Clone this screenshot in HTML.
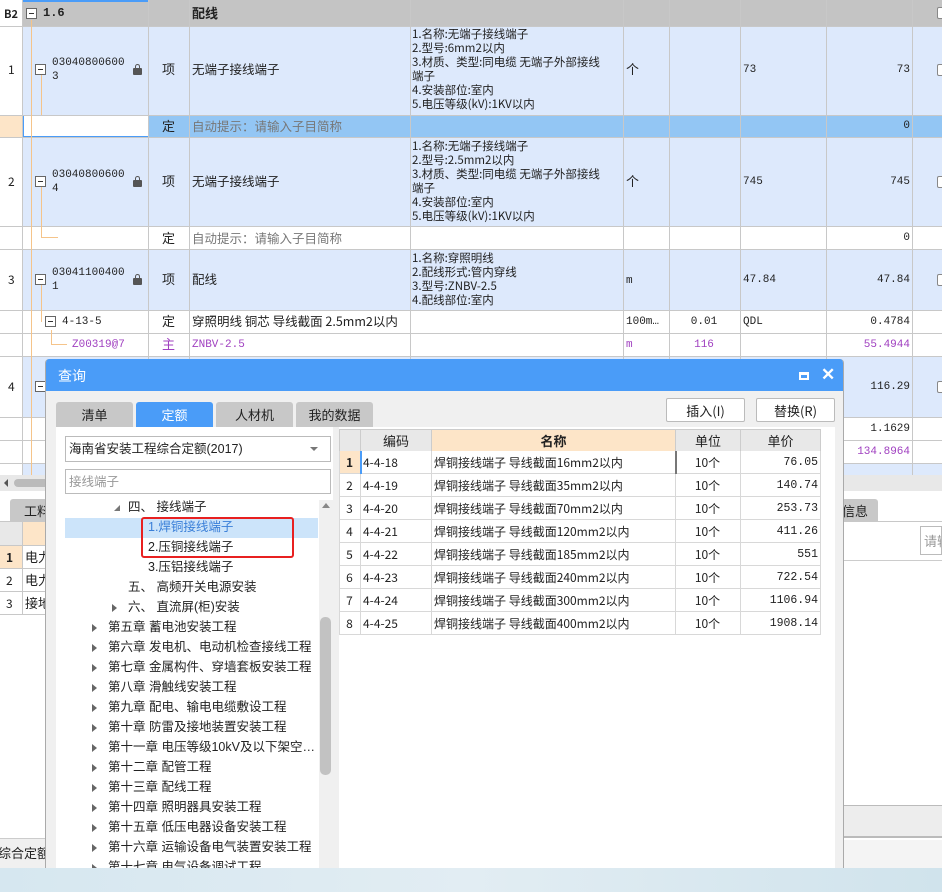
<!DOCTYPE html>
<html><head><meta charset="utf-8"><style>
*{margin:0;padding:0;box-sizing:border-box}
body{width:942px;height:892px;overflow:hidden;position:relative;background:#fff;font-family:"Liberation Sans","Noto Sans CJK SC",sans-serif;font-size:12px;color:#222}
.a{position:absolute;line-height:14px;white-space:nowrap}
.s{font-family:"WenQuanYi Zen Hei","Noto Sans CJK SC",sans-serif;font-size:12px}
.m{font-family:"Liberation Mono","WenQuanYi Zen Hei",monospace;font-size:11px}
.hl{position:absolute;height:1px;background:#c8c8c8;left:0;width:942px}
.vl{position:absolute;width:1px;background:#c8c8c8}
.bx{position:absolute;width:11px;height:11px;border:1px solid #666;background:#fff}
.bx:after{content:"";position:absolute;left:2px;top:4px;width:5px;height:1px;background:#333}
.lk{position:absolute;width:9px;height:7px;background:#555;border-radius:1px}
.lk:before{content:"";position:absolute;left:2px;top:-4px;width:5px;height:5px;border:1.5px solid #555;border-bottom:none;border-radius:3px 3px 0 0;box-sizing:border-box}
.tree{position:absolute;left:0;font-size:12.5px;line-height:15px;color:#222;white-space:nowrap;font-family:"Liberation Sans","Noto Sans CJK SC",sans-serif}
.tri{position:absolute;width:0;height:0;border-top:4px solid transparent;border-bottom:4px solid transparent;border-left:5px solid #666}
</style></head><body>
<div class="a" style="left:22px;top:0;width:920px;height:26px;background:#c4c4c4"></div>
<div class="a" style="left:22px;top:0;width:127px;height:2px;background:#4a9cf8"></div>
<div class="a" style="left:22px;top:26px;width:920px;height:89px;background:#dde9fc"></div>
<div class="a" style="left:148px;top:115px;width:794px;height:22px;background:#93c6f4"></div>
<div class="a" style="left:0;top:115px;width:22px;height:22px;background:#fde5c8"></div>
<div class="a" style="left:22px;top:115px;width:127px;height:22px;border:1px solid #4a9cf8;border-left:2px solid #4a9cf8;background:#fff"></div>
<div class="a" style="left:22px;top:137px;width:920px;height:89px;background:#dde9fc"></div>
<div class="a" style="left:22px;top:249px;width:920px;height:61px;background:#dde9fc"></div>
<div class="a" style="left:22px;top:356px;width:920px;height:61px;background:#dde9fc"></div>
<div class="a" style="left:22px;top:463px;width:920px;height:12px;background:#dde9fc"></div>
<div class="hl" style="top:26px"></div><div class="hl" style="top:115px"></div><div class="hl" style="top:137px"></div>
<div class="hl" style="top:226px"></div><div class="hl" style="top:249px"></div><div class="hl" style="top:310px"></div>
<div class="hl" style="top:333px"></div><div class="hl" style="top:356px"></div><div class="hl" style="top:417px"></div>
<div class="hl" style="top:440px"></div><div class="hl" style="top:463px"></div>
<div class="vl" style="left:22px;top:0;height:475px"></div><div class="vl" style="left:148px;top:0;height:475px"></div>
<div class="vl" style="left:189px;top:0;height:475px"></div><div class="vl" style="left:410px;top:0;height:475px"></div>
<div class="vl" style="left:623px;top:0;height:475px"></div><div class="vl" style="left:669px;top:0;height:475px"></div>
<div class="vl" style="left:740px;top:0;height:475px"></div><div class="vl" style="left:826px;top:0;height:475px"></div>
<div class="vl" style="left:912px;top:0;height:475px"></div>
<div class="vl" style="left:31px;top:20px;height:455px;background:#f5c48a"></div>
<div class="vl" style="left:41px;top:75px;height:40px;background:#f5c48a"></div>
<div class="vl" style="left:41px;top:185px;height:53px;background:#f5c48a"></div>
<div class="a" style="left:41px;top:237px;width:17px;height:1px;background:#f5c48a"></div>
<div class="vl" style="left:41px;top:285px;height:37px;background:#f5c48a"></div>
<div class="vl" style="left:51px;top:330px;height:14px;background:#f5c48a"></div>
<div class="a" style="left:51px;top:344px;width:16px;height:1px;background:#f5c48a"></div>
<div class="a s" style="left:4px;top:7px;font-weight:bold;font-size:11px">B2</div>
<div class="bx" style="left:26px;top:8px"></div>
<div class="a m" style="left:43px;top:6px;font-weight:bold;font-size:12px">1.6</div>
<div class="a s" style="left:192px;top:6px;font-weight:bold;font-size:13px">配线</div>
<div class="a" style="left:937px;top:7px;width:8px;height:12px;border:1px solid #888;border-radius:2px;background:#fff"></div>
<div class="a s" style="left:8px;top:63px">1</div>
<div class="bx" style="left:35px;top:64px"></div>
<div class="a m" style="left:52px;top:56px">03040800600<br>3</div>
<div class="lk" style="left:133px;top:68px"></div>
<div class="a s" style="left:162px;top:62px;font-size:13px">项</div>
<div class="a s" style="left:192px;top:62px;font-size:12.5px">无端子接线端子</div>
<div class="a s" style="left:412px;top:27px;font-size:11.5px">1.名称:无端子接线端子<br>2.型号:6mm2以内<br>3.材质、类型:同电缆 无端子外部接线<br>端子<br>4.安装部位:室内<br>5.电压等级(kV):1KV以内</div>
<div class="a s" style="left:626px;top:62px;font-size:13px">个</div>
<div class="a m" style="left:743px;top:63px">73</div>
<div class="a m" style="left:826px;top:63px;width:84px;text-align:right">73</div>
<div class="a" style="left:937px;top:64px;width:8px;height:12px;border:1px solid #888;border-radius:2px;background:#fff"></div>
<div class="a s" style="left:162px;top:119px;font-size:13px">定</div>
<div class="a s" style="left:192px;top:119px;color:#777;font-size:12.5px">自动提示：请输入子目简称</div>
<div class="a m" style="left:826px;top:119px;width:84px;text-align:right">0</div>
<div class="a s" style="left:8px;top:175px">2</div>
<div class="bx" style="left:35px;top:176px"></div>
<div class="a m" style="left:52px;top:168px">03040800600<br>4</div>
<div class="lk" style="left:133px;top:180px"></div>
<div class="a s" style="left:162px;top:174px;font-size:13px">项</div>
<div class="a s" style="left:192px;top:174px;font-size:12.5px">无端子接线端子</div>
<div class="a s" style="left:412px;top:139px;font-size:11.5px">1.名称:无端子接线端子<br>2.型号:2.5mm2以内<br>3.材质、类型:同电缆 无端子外部接线<br>端子<br>4.安装部位:室内<br>5.电压等级(kV):1KV以内</div>
<div class="a s" style="left:626px;top:174px;font-size:13px">个</div>
<div class="a m" style="left:743px;top:175px">745</div>
<div class="a m" style="left:826px;top:175px;width:84px;text-align:right">745</div>
<div class="a" style="left:937px;top:176px;width:8px;height:12px;border:1px solid #888;border-radius:2px;background:#fff"></div>
<div class="a s" style="left:162px;top:231px;font-size:13px">定</div>
<div class="a s" style="left:192px;top:231px;color:#777;font-size:12.5px">自动提示：请输入子目简称</div>
<div class="a m" style="left:826px;top:231px;width:84px;text-align:right">0</div>
<div class="a s" style="left:8px;top:273px">3</div>
<div class="bx" style="left:35px;top:274px"></div>
<div class="a m" style="left:52px;top:266px">03041100400<br>1</div>
<div class="lk" style="left:133px;top:278px"></div>
<div class="a s" style="left:162px;top:272px;font-size:13px">项</div>
<div class="a s" style="left:192px;top:272px;font-size:12.5px">配线</div>
<div class="a s" style="left:412px;top:251px;font-size:11.5px">1.名称:穿照明线<br>2.配线形式:管内穿线<br>3.型号:ZNBV-2.5<br>4.配线部位:室内</div>
<div class="a m" style="left:626px;top:274px">m</div>
<div class="a m" style="left:743px;top:273px">47.84</div>
<div class="a m" style="left:826px;top:273px;width:84px;text-align:right">47.84</div>
<div class="a" style="left:937px;top:274px;width:8px;height:12px;border:1px solid #888;border-radius:2px;background:#fff"></div>
<div class="bx" style="left:45px;top:316px"></div>
<div class="a m" style="left:62px;top:315px">4-13-5</div>
<div class="a s" style="left:162px;top:314px;font-size:13px">定</div>
<div class="a s" style="left:192px;top:314px;font-size:12.5px">穿照明线 铜芯 导线截面 2.5mm2以内</div>
<div class="a m" style="left:626px;top:315px">100m…</div>
<div class="a m" style="left:669px;top:315px;width:70px;text-align:center">0.01</div>
<div class="a m" style="left:743px;top:315px">QDL</div>
<div class="a m" style="left:826px;top:315px;width:84px;text-align:right">0.4784</div>
<div class="a m" style="left:72px;top:338px;color:#a040c0">Z00319@7</div>
<div class="a s" style="left:162px;top:337px;font-size:13px;color:#a040c0">主</div>
<div class="a m" style="left:192px;top:338px;color:#a040c0">ZNBV-2.5</div>
<div class="a m" style="left:626px;top:338px;color:#a040c0">m</div>
<div class="a m" style="left:669px;top:338px;width:70px;text-align:center;color:#a040c0">116</div>
<div class="a m" style="left:826px;top:338px;width:84px;text-align:right;color:#a040c0">55.4944</div>
<div class="a s" style="left:8px;top:380px">4</div>
<div class="bx" style="left:35px;top:381px"></div>
<div class="a m" style="left:826px;top:380px;width:84px;text-align:right">116.29</div>
<div class="a" style="left:937px;top:381px;width:8px;height:12px;border:1px solid #888;border-radius:2px;background:#fff"></div>
<div class="a m" style="left:826px;top:422px;width:84px;text-align:right">1.1629</div>
<div class="a m" style="left:826px;top:445px;width:84px;text-align:right;color:#a040c0">134.8964</div>
<div class="a" style="left:0;top:475px;width:942px;height:16px;background:#e8e8e8"></div>
<div class="a" style="left:14px;top:479px;width:40px;height:8px;background:#bbb;border-radius:4px"></div>
<div class="a" style="left:4px;top:479px;width:0;height:0;border-top:4px solid transparent;border-bottom:4px solid transparent;border-right:4px solid #555"></div>
<div class="a" style="left:0;top:491px;width:942px;height:378px;background:#fff"></div>
<div class="a" style="left:10px;top:499px;width:40px;height:22px;background:#c8c8c8;border-radius:3px 3px 0 0"></div>
<div class="a s" style="left:24px;top:504px;font-size:13px">工料</div>
<div class="a" style="left:830px;top:499px;width:48px;height:22px;background:#c8c8c8;border-radius:3px 3px 0 0"></div>
<div class="a s" style="left:842px;top:504px;font-size:13px">信息</div>
<div class="a" style="left:0;top:521px;width:942px;height:1px;background:#c8c8c8"></div>
<div class="a" style="left:0;top:522px;width:22px;height:23px;background:#e8e8e8"></div>
<div class="a" style="left:22px;top:522px;width:30px;height:23px;background:#fde5c8"></div>
<div class="a" style="left:0;top:545px;width:22px;height:23px;background:#fde5c8"></div>
<div class="hl" style="top:545px;width:50px"></div><div class="hl" style="top:568px;width:50px"></div><div class="hl" style="top:591px;width:50px"></div><div class="hl" style="top:614px;width:50px"></div>
<div class="vl" style="left:22px;top:522px;height:92px"></div>
<div class="a s" style="left:6px;top:551px;font-weight:bold">1</div><div class="a s" style="left:25px;top:550px;font-size:13px">电力</div>
<div class="a s" style="left:6px;top:574px">2</div><div class="a s" style="left:25px;top:573px;font-size:13px">电力</div>
<div class="a s" style="left:6px;top:597px">3</div><div class="a s" style="left:25px;top:596px;font-size:13px">接地</div>
<div class="a" style="left:0;top:838px;width:45px;height:30px;background:#f0f0f0;border-top:1px solid #ccc"></div>
<div class="a s" style="left:-2px;top:846px;font-size:13px">综合定额(2</div>
<div class="a" style="left:920px;top:526px;width:22px;height:29px;border:1px solid #bbb;overflow:hidden"><div class="a s" style="left:3px;top:7px;color:#999;font-size:13px">请输</div></div>
<div class="a" style="left:844px;top:560px;width:98px;height:1px;background:#ccc"></div>
<div class="a" style="left:844px;top:805px;width:98px;height:33px;background:#ededed;border-top:1px solid #bbb;border-bottom:2px solid #bbb"></div>
<div class="a" style="left:844px;top:840px;width:98px;height:28px;background:#f4f4f4"></div>
<div class="a" style="left:0;top:868px;width:942px;height:24px;background:linear-gradient(90deg,#d6e7f0,#e2edf3 50%,#d0e3ec)"></div>
<div class="a" style="left:45px;top:359px;width:799px;height:509px;background:#f0f0f0;border-left:1px solid #aaa;border-right:1px solid #aaa;border-radius:4px 4px 0 0;overflow:hidden">
 <div class="a" style="left:0;top:0;width:799px;height:32px;background:#4a9cf8"></div>
 <div class="a s" style="left:12px;top:10px;color:#fff;font-size:14px">查询</div>
 <div class="a" style="left:753px;top:13px;width:10px;height:8px;border:2px solid #fff;border-top-width:3px"></div>
 <div class="a" style="left:775px;top:7px;color:#fff;font-size:17px;font-weight:bold;line-height:18px">✕</div>
 <div class="a" style="left:10px;top:43px;width:77px;height:25px;background:#c8c8c8;border-radius:3px 3px 0 0"></div>
 <div class="a s" style="left:10px;top:49px;width:77px;text-align:center;font-size:13px">清单</div>
 <div class="a" style="left:90px;top:43px;width:77px;height:25px;background:#4a9cf8;border-radius:3px 3px 0 0"></div>
 <div class="a s" style="left:90px;top:49px;width:77px;text-align:center;font-size:13px;color:#fff">定额</div>
 <div class="a" style="left:170px;top:43px;width:77px;height:25px;background:#c8c8c8;border-radius:3px 3px 0 0"></div>
 <div class="a s" style="left:170px;top:49px;width:77px;text-align:center;font-size:13px">人材机</div>
 <div class="a" style="left:250px;top:43px;width:77px;height:25px;background:#c8c8c8;border-radius:3px 3px 0 0"></div>
 <div class="a s" style="left:250px;top:49px;width:77px;text-align:center;font-size:13px">我的数据</div>
 <div class="a" style="left:620px;top:39px;width:79px;height:24px;background:#fff;border:1px solid #bbb;border-radius:2px"></div>
 <div class="a s" style="left:620px;top:45px;width:79px;text-align:center;font-size:13px">插入(I)</div>
 <div class="a" style="left:710px;top:39px;width:79px;height:24px;background:#fff;border:1px solid #bbb;border-radius:2px"></div>
 <div class="a s" style="left:710px;top:45px;width:79px;text-align:center;font-size:13px">替换(R)</div>
 <div class="a" style="left:10px;top:68px;width:277px;height:441px;background:#fff;overflow:hidden">
  <div class="a" style="left:9px;top:9px;width:266px;height:26px;border:1px solid #bbb"></div>
  <div class="a" style="left:13px;top:15px;font-size:12.5px">海南省安装工程综合定额(2017)</div>
  <div class="a" style="left:254px;top:20px;border-left:4px solid transparent;border-right:4px solid transparent;border-top:4px solid #777"></div>
  <div class="a" style="left:9px;top:42px;width:266px;height:25px;border:1px solid #bbb"></div>
  <div class="a" style="left:13px;top:48px;font-size:12.5px;color:#999">接线端子</div>
  <div class="a" style="left:9px;top:91px;width:253px;height:20px;background:#cce4fa"></div>
  <div class="a" style="left:85px;top:90px;width:153px;height:41px;border:2px solid #e82020;border-radius:3px"></div>
  <div class="a" style="left:58px;top:78px;width:0;height:0;border-left:6px solid transparent;border-bottom:6px solid #777"></div>
  <div class="tree" style="left:72px;top:73px">四、 接线端子</div>
  <div class="tree" style="left:92px;top:93px;color:#3a7fd8">1.焊铜接线端子</div>
  <div class="tree" style="left:92px;top:113px">2.压铜接线端子</div>
  <div class="tree" style="left:92px;top:133px">3.压铝接线端子</div>
  <div class="tree" style="left:72px;top:153px">五、 高频开关电源安装</div>
  <div class="tri" style="left:56px;top:177px"></div><div class="tree" style="left:72px;top:173px">六、 直流屏(柜)安装</div>
  <div class="tri" style="left:36px;top:197px"></div><div class="tree" style="left:52px;top:193px">第五章 蓄电池安装工程</div>
  <div class="tri" style="left:36px;top:217px"></div><div class="tree" style="left:52px;top:213px">第六章 发电机、电动机检查接线工程</div>
  <div class="tri" style="left:36px;top:237px"></div><div class="tree" style="left:52px;top:233px">第七章 金属构件、穿墙套板安装工程</div>
  <div class="tri" style="left:36px;top:257px"></div><div class="tree" style="left:52px;top:253px">第八章 滑触线安装工程</div>
  <div class="tri" style="left:36px;top:277px"></div><div class="tree" style="left:52px;top:273px">第九章 配电、输电电缆敷设工程</div>
  <div class="tri" style="left:36px;top:297px"></div><div class="tree" style="left:52px;top:293px">第十章 防雷及接地装置安装工程</div>
  <div class="tri" style="left:36px;top:317px"></div><div class="tree" style="left:52px;top:313px">第十一章 电压等级10kV及以下架空…</div>
  <div class="tri" style="left:36px;top:337px"></div><div class="tree" style="left:52px;top:333px">第十二章 配管工程</div>
  <div class="tri" style="left:36px;top:357px"></div><div class="tree" style="left:52px;top:353px">第十三章 配线工程</div>
  <div class="tri" style="left:36px;top:377px"></div><div class="tree" style="left:52px;top:373px">第十四章 照明器具安装工程</div>
  <div class="tri" style="left:36px;top:397px"></div><div class="tree" style="left:52px;top:393px">第十五章 低压电器设备安装工程</div>
  <div class="tri" style="left:36px;top:417px"></div><div class="tree" style="left:52px;top:413px">第十六章 运输设备电气装置安装工程</div>
  <div class="tri" style="left:36px;top:437px"></div><div class="tree" style="left:52px;top:433px">第十七章 电气设备调试工程</div>
  <div class="a" style="left:263px;top:73px;width:14px;height:368px;background:#f0f0f0"></div>
  <div class="a" style="left:266px;top:76px;border-left:4px solid transparent;border-right:4px solid transparent;border-bottom:5px solid #888"></div>
  <div class="a" style="left:264px;top:190px;width:11px;height:158px;background:#c2c2c2;border-radius:5px"></div>
 </div>
 <div class="a" style="left:293px;top:68px;width:496px;height:441px;background:#fff"></div>
 <div class="a" style="left:293px;top:70px;width:482px;height:22px">
  <table style="border-collapse:collapse;font-size:12px;table-layout:fixed;width:482px" class="s">
   <colgroup><col style="width:21px"><col style="width:71px"><col style="width:244px"><col style="width:65px"><col style="width:80px"></colgroup>
   <tr style="height:22px;text-align:center;font-size:13px;line-height:14px"><td style="background:#e8e8e8;border:1px solid #ccc"></td><td style="background:#e8e8e8;border:1px solid #ccc">编码</td><td style="background:#fde5c8;border:1px solid #ccc;font-weight:bold">名称</td><td style="background:#e8e8e8;border:1px solid #ccc">单位</td><td style="background:#e8e8e8;border:1px solid #ccc">单价</td></tr>
  </table>
 </div>
 <div class="a s" style="left:293px;top:92px;width:482px;font-size:12px">
  <style>.r{position:relative;height:23px;border-bottom:1px solid #d8d8d8;line-height:14px;white-space:nowrap}.r div{position:absolute;top:5px}.r .n{left:0;width:21px;text-align:center}.r .c{left:24px}.r .x{left:95px}.r .u{left:336px;width:65px;text-align:center}.r .p{left:401px;width:78px;text-align:right;font-family:"Liberation Mono",monospace;font-size:11.5px}.r .gl{position:absolute;top:0;width:1px;height:23px;background:#d8d8d8}</style>
  <div class="r" style="background:linear-gradient(90deg,#fde5c8 21px,#fff 21px)"><span class="gl" style="left:21px;background:#4a9cf8;width:2px"></span><span class="gl" style="left:92px"></span><span class="gl" style="left:336px;background:#777;width:2px"></span><span class="gl" style="left:401px"></span><span class="gl" style="left:481px"></span><span class="gl" style="left:0"></span><div class="n" style="font-weight:bold">1</div><div class="c">4-4-18</div><div class="x">焊铜接线端子 导线截面16mm2以内</div><div class="u">10个</div><div class="p">76.05</div></div>
  <div class="r"><span class="gl" style="left:0"></span><span class="gl" style="left:21px"></span><span class="gl" style="left:92px"></span><span class="gl" style="left:336px"></span><span class="gl" style="left:401px"></span><span class="gl" style="left:481px"></span><div class="n">2</div><div class="c">4-4-19</div><div class="x">焊铜接线端子 导线截面35mm2以内</div><div class="u">10个</div><div class="p">140.74</div></div>
  <div class="r"><span class="gl" style="left:0"></span><span class="gl" style="left:21px"></span><span class="gl" style="left:92px"></span><span class="gl" style="left:336px"></span><span class="gl" style="left:401px"></span><span class="gl" style="left:481px"></span><div class="n">3</div><div class="c">4-4-20</div><div class="x">焊铜接线端子 导线截面70mm2以内</div><div class="u">10个</div><div class="p">253.73</div></div>
  <div class="r"><span class="gl" style="left:0"></span><span class="gl" style="left:21px"></span><span class="gl" style="left:92px"></span><span class="gl" style="left:336px"></span><span class="gl" style="left:401px"></span><span class="gl" style="left:481px"></span><div class="n">4</div><div class="c">4-4-21</div><div class="x">焊铜接线端子 导线截面120mm2以内</div><div class="u">10个</div><div class="p">411.26</div></div>
  <div class="r"><span class="gl" style="left:0"></span><span class="gl" style="left:21px"></span><span class="gl" style="left:92px"></span><span class="gl" style="left:336px"></span><span class="gl" style="left:401px"></span><span class="gl" style="left:481px"></span><div class="n">5</div><div class="c">4-4-22</div><div class="x">焊铜接线端子 导线截面185mm2以内</div><div class="u">10个</div><div class="p">551</div></div>
  <div class="r"><span class="gl" style="left:0"></span><span class="gl" style="left:21px"></span><span class="gl" style="left:92px"></span><span class="gl" style="left:336px"></span><span class="gl" style="left:401px"></span><span class="gl" style="left:481px"></span><div class="n">6</div><div class="c">4-4-23</div><div class="x">焊铜接线端子 导线截面240mm2以内</div><div class="u">10个</div><div class="p">722.54</div></div>
  <div class="r"><span class="gl" style="left:0"></span><span class="gl" style="left:21px"></span><span class="gl" style="left:92px"></span><span class="gl" style="left:336px"></span><span class="gl" style="left:401px"></span><span class="gl" style="left:481px"></span><div class="n">7</div><div class="c">4-4-24</div><div class="x">焊铜接线端子 导线截面300mm2以内</div><div class="u">10个</div><div class="p">1106.94</div></div>
  <div class="r"><span class="gl" style="left:0"></span><span class="gl" style="left:21px"></span><span class="gl" style="left:92px"></span><span class="gl" style="left:336px"></span><span class="gl" style="left:401px"></span><span class="gl" style="left:481px"></span><div class="n">8</div><div class="c">4-4-25</div><div class="x">焊铜接线端子 导线截面400mm2以内</div><div class="u">10个</div><div class="p">1908.14</div></div>
 </div>
</div>
</body></html>
